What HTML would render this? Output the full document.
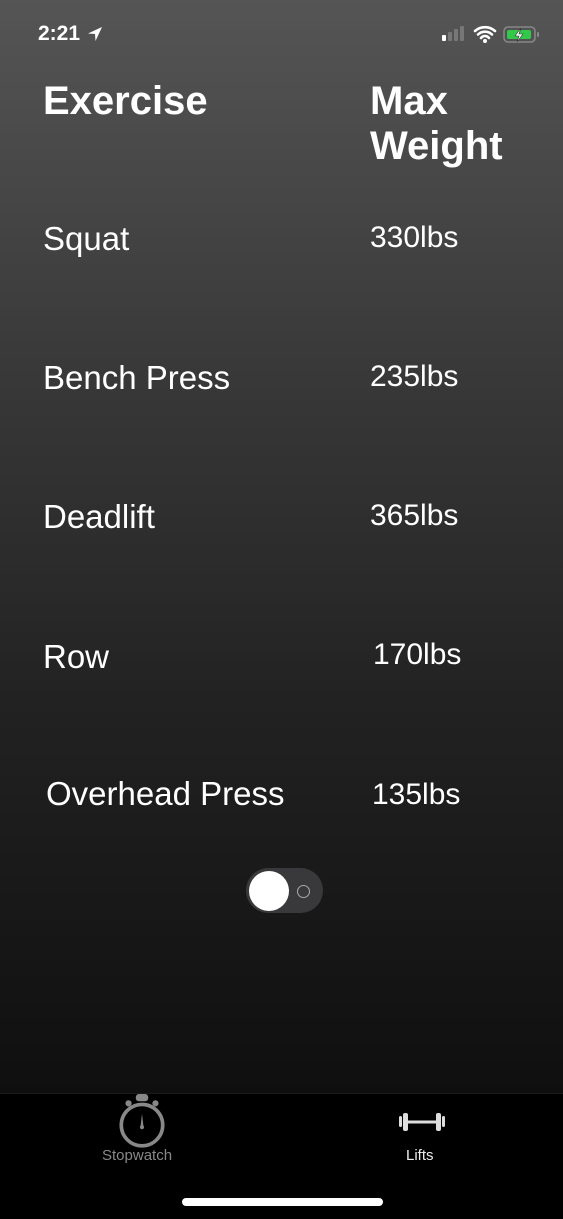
<!DOCTYPE html>
<html><head><meta charset="utf-8"><style>
html,body{margin:0;padding:0}
body{width:563px;height:1218px;position:relative;overflow:hidden;background:linear-gradient(#555555 0px,#3a3a3a 350px,#222 700px,#0f0f0f 1093px);font-family:"Liberation Sans",sans-serif;color:#fff}
.t{position:absolute;line-height:1;white-space:nowrap}
.h{font-weight:bold;font-size:40px}
.n{font-size:33px}
.v{font-size:30px}
.tab{position:absolute;left:0;top:1093px;width:563px;height:125px;background:#000;border-top:1px solid #1a1a1a}
</style></head><body>
<div class="t" style="left:38px;top:23px;font-size:21px;font-weight:bold">2:21</div>
<svg style="position:absolute;left:87px;top:26px" width="16" height="16" viewBox="0 0 16 16"><path d="M15 1L1 7.5 8 8 8.5 15Z" fill="#fff"/></svg>
<svg style="position:absolute;left:440px;top:24px" width="105" height="22" viewBox="0 0 105 22">
<rect x="2" y="11" width="4" height="6" rx="1" fill="#fff"/>
<rect x="8" y="8" width="4" height="9" rx="1" fill="#777"/>
<rect x="14" y="5" width="4" height="12" rx="1" fill="#777"/>
<rect x="20" y="2" width="4" height="15" rx="1" fill="#777"/>
<path d="M35 7a15 15 0 0 1 20 0M38 10.5a10 10 0 0 1 14 0M41 14a5 5 0 0 1 8 0" stroke="#fff" stroke-width="2.6" fill="none" stroke-linecap="round"/>
<circle cx="45" cy="17" r="2" fill="#fff"/>
<rect x="64" y="3" width="31" height="15" rx="4" fill="none" stroke="#888" stroke-width="1.5"/>
<rect x="67" y="6" width="24" height="9" rx="2" fill="#32c84a"/>
<rect x="97" y="8" width="2" height="5" rx="1" fill="#888"/>
<path d="M81 4l-6 8h4l-2 6 6-8h-4z" fill="#fff" stroke="#333" stroke-width=".6"/>
</svg>
<div class="t h" style="left:43px;top:81px">Exercise</div>
<div class="t h" style="left:370px;top:81px">Max</div>
<div class="t h" style="left:370px;top:126px">Weight</div>
<div class="t n" style="left:43px;top:222px">Squat</div>
<div class="t v" style="left:370px;top:223px">330lbs</div>
<div class="t n" style="left:43px;top:361px">Bench Press</div>
<div class="t v" style="left:370px;top:362px">235lbs</div>
<div class="t n" style="left:43px;top:500px">Deadlift</div>
<div class="t v" style="left:370px;top:501px">365lbs</div>
<div class="t n" style="left:43px;top:640px">Row</div>
<div class="t v" style="left:373px;top:640px">170lbs</div>
<div class="t n" style="left:46px;top:777px">Overhead Press</div>
<div class="t v" style="left:372px;top:780px">135lbs</div>
<div style="position:absolute;left:246px;top:868px;width:77px;height:45px;border-radius:23px;background:#39393b"></div>
<div style="position:absolute;left:249px;top:871px;width:40px;height:40px;border-radius:50%;background:#fff"></div>
<div style="position:absolute;left:297px;top:885px;width:11px;height:11px;border-radius:50%;border:1.5px solid #aaa"></div>
<div class="tab"></div>
<svg style="position:absolute;left:115px;top:1093px" width="54" height="58" viewBox="0 0 52 56">
<rect x="20" y="1" width="12" height="7" rx="3" fill="#888"/>
<circle cx="13" cy="10" r="3" fill="#888"/><circle cx="39" cy="10" r="3" fill="#888"/>
<circle cx="26" cy="31" r="20" fill="none" stroke="#888" stroke-width="3.5"/>
<path d="M24.5 33L26 20 27.5 33Z" fill="#888"/><circle cx="26" cy="33" r="2" fill="#888"/>
</svg>
<div class="t" style="left:102px;top:1148px;font-size:15px;color:#888">Stopwatch</div>
<svg style="position:absolute;left:398px;top:1111px" width="48" height="22" viewBox="0 0 48 22">
<rect x="1" y="5" width="3" height="11" rx="1.5" fill="#ddd"/><rect x="5" y="2" width="5" height="18" rx="2" fill="#ddd"/>
<rect x="10" y="9.5" width="28" height="3" fill="#ddd"/>
<rect x="38" y="2" width="5" height="18" rx="2" fill="#ddd"/><rect x="44" y="5" width="3" height="11" rx="1.5" fill="#ddd"/>
</svg>
<div class="t" style="left:406px;top:1148px;font-size:15px;color:#eee">Lifts</div>
<div style="position:absolute;left:182px;top:1198px;width:201px;height:8px;border-radius:4px;background:#fff"></div>
</body></html>
